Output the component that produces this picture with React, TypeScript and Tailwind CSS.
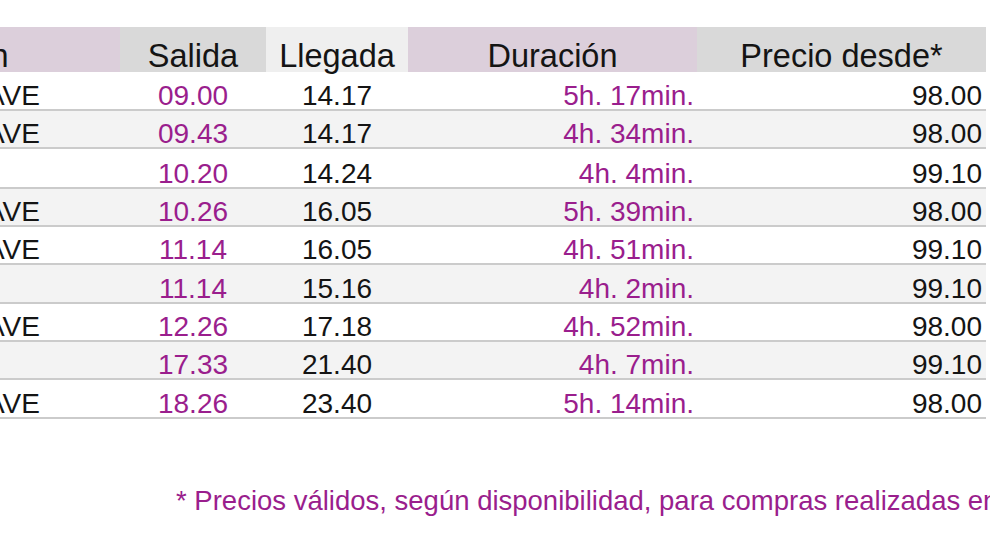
import React from 'react';

interface TrainRow {
  tipo: string;
  salida: string;
  llegada: string;
  duracion: string;
  precio: string;
  height: string;
}

const rows: TrainRow[] = [
  { tipo: 'AVE', salida: '09.00', llegada: '14.17', duracion: '5h. 17min.', precio: '98.00', height: 'h-[39px]' },
  { tipo: 'AVE', salida: '09.43', llegada: '14.17', duracion: '4h. 34min.', precio: '98.00', height: 'h-[38px]' },
  { tipo: '', salida: '10.20', llegada: '14.24', duracion: '4h. 4min.', precio: '99.10', height: 'h-[40px]' },
  { tipo: 'AVE', salida: '10.26', llegada: '16.05', duracion: '5h. 39min.', precio: '98.00', height: 'h-[38px]' },
  { tipo: 'AVE', salida: '11.14', llegada: '16.05', duracion: '4h. 51min.', precio: '99.10', height: 'h-[38px]' },
  { tipo: '', salida: '11.14', llegada: '15.16', duracion: '4h. 2min.', precio: '99.10', height: 'h-[39px]' },
  { tipo: 'AVE', salida: '12.26', llegada: '17.18', duracion: '4h. 52min.', precio: '98.00', height: 'h-[38px]' },
  { tipo: '', salida: '17.33', llegada: '21.40', duracion: '4h. 7min.', precio: '99.10', height: 'h-[38px]' },
  { tipo: 'AVE', salida: '18.26', llegada: '23.40', duracion: '5h. 14min.', precio: '98.00', height: 'h-[39px]' },
];

export default function App() {
  return (
    <div className="w-[990px] h-[556px] overflow-hidden bg-white font-['Liberation_Sans',Arial,sans-serif] text-[#141414]">
      <div className="pt-[27px] w-[986px]">
        {/* Header */}
        <div className="flex h-[45px] text-[32.5px] leading-none">
          <div className="w-[120px] bg-[#dccfdb] flex items-end whitespace-nowrap">
            <span className="-ml-[57px]">Tren</span>
          </div>
          <div className="w-[146px] bg-[#d9d9d9] flex items-end justify-center">Salida</div>
          <div className="w-[142px] bg-[#efefef] flex items-end justify-center">Llegada</div>
          <div className="w-[289px] bg-[#dccfdb] flex items-end justify-center">Duración</div>
          <div className="w-[289px] bg-[#d9d9d9] flex items-end justify-center">Precio desde*</div>
        </div>

        {/* Rows */}
        {rows.map((r, i) => (
          <div
            key={i}
            className={`flex ${r.height} border-b-2 border-[#cbcbcb] text-[28px] leading-[26px] ${
              i % 2 === 1 ? 'bg-[#f3f3f3]' : 'bg-white'
            }`}
          >
            <div className="w-[120px] flex items-end whitespace-nowrap">
              <span className="-ml-[14px]">{r.tipo}</span>
            </div>
            <div className="w-[146px] flex items-end justify-center text-[#9a1e8d]">{r.salida}</div>
            <div className="w-[142px] flex items-end justify-center">{r.llegada}</div>
            <div className="w-[289px] flex items-end justify-end pr-[3px] text-[#9a1e8d] whitespace-pre">{r.duracion}</div>
            <div className="w-[289px] flex items-end justify-end pr-[4px]">{r.precio}</div>
          </div>
        ))}
      </div>

      {/* Footnote */}
      <p className="mt-[68px] pl-[176px] text-[27.5px] leading-none text-[#9a1e8d] whitespace-nowrap">
        * Precios válidos, según disponibilidad, para compras realizadas en
      </p>
    </div>
  );
}
